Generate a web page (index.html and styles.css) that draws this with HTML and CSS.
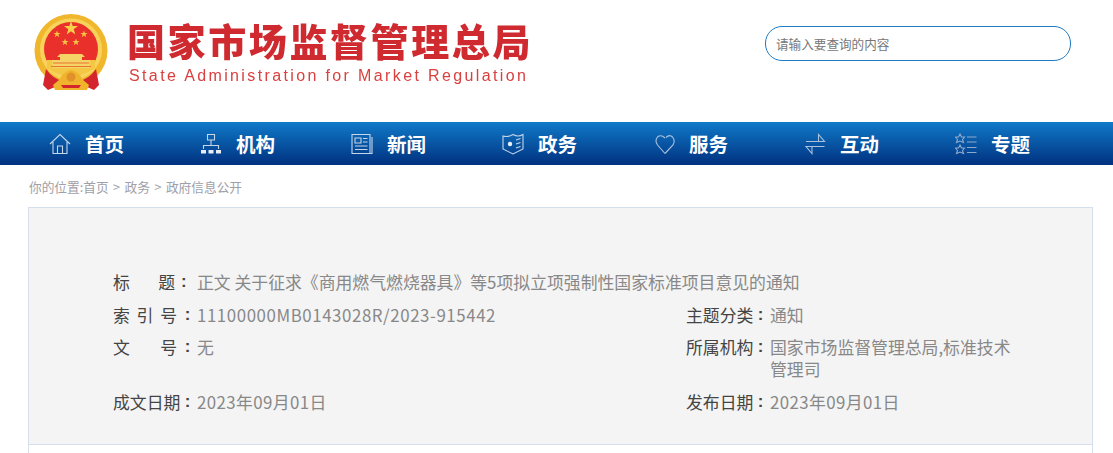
FILE: index.html
```html
<!DOCTYPE html>
<html lang="zh-CN">
<head>
  <meta charset="UTF-8">
  <title>国家市场监督管理总局</title>
  <link rel="stylesheet" href="styles.css">
</head>
<body>
  <div class="header">
    <div class="logo">
      <!-- national emblem -->
      <svg class="emblem" width="80" height="80" viewBox="0 0 80 80">
        <circle cx="40" cy="37.500" r="36.500" fill="#f0b62c"/>
        <circle cx="40" cy="36.500" r="31" fill="#f7d35c"/>
        <circle cx="40" cy="36" r="27" fill="#e9302a"/>
        <path d="M16 47 H64 V55 Q52 63 40 63 Q28 63 16 55Z" fill="#f3c744"/>
        <path d="M29 41 H51 L54 44 H51 V47 H59 V55 H21 V47 H29 V44 H26Z" fill="#f6d366"/>
        <path d="M22 50 H58 M20 53.500 H60" stroke="#e8742f" stroke-width="1"/>
        <polygon points="40,8 41.700,13 47,13 42.700,16.200 44.300,21.500 40,18.300 35.700,21.500 37.300,16.200 33,13 38.300,13" fill="#f8d04a"/>
        <polygon points="26,17.500 26.900,20 29.500,20 27.400,21.600 28.200,24.200 26,22.600 23.800,24.200 24.600,21.600 22.500,20 25.100,20" fill="#f5c644"/>
        <polygon points="53,17.500 53.900,20 56.500,20 54.400,21.600 55.200,24.200 53,22.600 50.800,24.200 51.600,21.600 49.500,20 52.100,20" fill="#f5c644"/>
        <polygon points="34,25.500 34.900,28 37.500,28 35.400,29.600 36.200,32.200 34,30.600 31.800,32.200 32.600,29.600 30.500,28 33.100,28" fill="#f5c644"/>
        <polygon points="45,25.500 45.900,28 48.500,28 46.400,29.600 47.200,32.200 45,30.600 42.800,32.200 43.600,29.600 41.500,28 44.100,28" fill="#f5c644"/>
        <path d="M15 56 Q22 66 32 68 L32 75 L24 74 L17 77 L12 72Z" fill="#d5252c"/>
        <path d="M65 56 Q58 66 48 68 L48 75 L56 74 L63 77 L68 72Z" fill="#d5252c"/>
        <path d="M28 67 Q33 58 40 57 Q47 58 52 67 L58 72 L56 77 H24 L22 72Z" fill="#efb42b"/>
        <circle cx="40" cy="64" r="4.500" fill="#e0912a"/>
        <path d="M30 72 H50 L48 75 H32Z" fill="#d5252c"/>
      </svg>
      <div class="logo-text">
        <div class="logo-cn">国家市场监督管理总局</div>
        <div class="logo-en">State Administration for Market Regulation</div>
      </div>
    </div>
    <input class="search" type="text" placeholder="请输入要查询的内容">
  </div>

  <div class="nav">
    <a class="nav-item">
      <svg class="nav-icon" viewBox="0 0 22 22"><path d="M1 11 L11 1.500 L21 11 M4 9 V20.500 H18 V9 M8.500 20.500 V13 H13.500 V20.500"/></svg>
      首页
    </a>
    <a class="nav-item">
      <svg class="nav-icon" viewBox="0 0 22 22"><path d="M7.500 1.500 H14.500 V7 H7.500Z M11 7 V12.500 M3.500 16 V12.500 H18.500 V16"/><path class="solid" d="M1 17 H6 V20.500 H1Z M8.500 17 H13.500 V20.500 H8.500Z M16 17 H21 V20.500 H16Z"/></svg>
      机构
    </a>
    <a class="nav-item">
      <svg class="nav-icon" viewBox="0 0 22 22"><path d="M1 1.500 H19 V20.500 H1Z M21 4 V20.500 H19 M4 5 H10 V10 H4Z M12 5.500 H16.500 M12 9 H16.500 M4 13 H16.500 M4 16.500 H16.500"/></svg>
      新闻
    </a>
    <a class="nav-item">
      <svg class="nav-icon" viewBox="0 0 22 22"><path d="M1 3 Q6 4.500 11 1.500 Q16 4.500 21 1.500 V16 L11 21 L1 16Z M14 7 L18.500 5.500 M14 11 L18.500 9.500 M14 15 L18.500 13.500"/><circle class="solid" cx="8" cy="11" r="2.200"/></svg>
      政务
    </a>
    <a class="nav-item">
      <svg class="nav-icon nav-icon-soft" viewBox="0 0 22 22"><path d="M12 20.500 L4.500 12 Q1.500 7.500 4.500 4 Q8 1 12 5 M12 20.500 L20 12 Q22.500 7.500 19.500 4 Q16.500 1 13 4.500"/></svg>
      服务
    </a>
    <a class="nav-item">
      <svg class="nav-icon nav-icon-soft" viewBox="0 0 22 22"><path d="M2 8.500 H20.500 L14.500 1.500 V8 M20.500 13.500 H2 L8 20.500 V14"/></svg>
      互动
    </a>
    <a class="nav-item">
      <svg class="nav-icon nav-icon-dim" viewBox="0 0 22 22"><path d="M5 1 L6.500 4 H9.500 L7.500 6.500 L8.500 9.500 L5 8 L1.500 9.500 L2.500 6.500 L0.500 4 H3.500Z M5 12 L6.500 15 H9.500 L7.500 17.500 L8.500 20.500 L5 19 L1.500 20.500 L2.500 17.500 L0.500 15 H3.500Z M12 4 H21.500 M12 9 H21.500 M12 14.500 H21.500 M12 19.500 H21.500"/></svg>
      专题
    </a>
  </div>

  <div class="crumb">你的位置:首页 &gt; 政务 &gt; 政府信息公开</div>

  <div class="panel">
    <div class="info">
      <div class="row row-full">
        <span class="label"><span class="name">标题</span><span class="colon">:</span></span>
        <span class="value">正文 关于征求《商用燃气燃烧器具》等5项拟立项强制性国家标准项目意见的通知</span>
      </div>
      <div class="row">
        <span class="label"><span class="name">索引号</span><span class="colon">:</span></span>
        <span class="value value-code">11100000MB0143028R/2023-915442</span>
      </div>
      <div class="row">
        <span class="label"><span class="name">主题分类</span><span class="colon">:</span></span>
        <span class="value">通知</span>
      </div>
      <div class="row">
        <span class="label"><span class="name">文号</span><span class="colon">:</span></span>
        <span class="value">无</span>
      </div>
      <div class="row">
        <span class="label"><span class="name">所属机构</span><span class="colon">:</span></span>
        <span class="value value-wrap">国家市场监督管理总局,标准技术管理司</span>
      </div>
      <div class="row">
        <span class="label"><span class="name">成文日期</span><span class="colon">:</span></span>
        <span class="value value-date">2023年09月01日</span>
      </div>
      <div class="row">
        <span class="label"><span class="name">发布日期</span><span class="colon">:</span></span>
        <span class="value value-date">2023年09月01日</span>
      </div>
    </div>
  </div>
  <div class="panel-rest"></div>
</body>
</html>
```

FILE: styles.css
```css
body {
  margin: 0;
  background-color: #fff;
  font-family: "Noto Sans CJK SC", "Liberation Sans", sans-serif;
  overflow: hidden;
}

/* header */
.header {
  display: flex;
  justify-content: space-between;
  align-items: flex-start;
  height: 122px;
  padding-right: 42px;
}
.logo {
  display: flex;
  align-items: flex-start;
  padding-left: 31px;
}
.emblem {
  margin-top: 13px;
  filter: blur(0.4px);
}
.logo-text {
  margin-left: 16px;
  filter: blur(0.3px);
}
.logo-cn {
  margin-top: 16px;
  font-size: 38px;
  line-height: 48px;
  font-weight: 900;
  letter-spacing: 2.6px;
  color: #cf2a2f;
  white-space: nowrap;
}
.logo-en {
  margin-top: 3px;
  margin-left: 2px;
  font-family: "Liberation Sans", sans-serif;
  font-size: 16px;
  line-height: 18px;
  letter-spacing: 2.37px;
  color: #d8413f;
  white-space: nowrap;
}
.search {
  box-sizing: border-box;
  width: 306px;
  height: 35px;
  margin-top: 26px;
  padding: 0 10px;
  border: 1px solid #1e7bc4;
  border-radius: 17px;
  background: #fff;
  font-family: "Noto Sans CJK SC", sans-serif;
  font-size: 12.6px;
  outline: none;
}
.search::placeholder {
  color: #777;
  opacity: 1;
}

/* nav */
.nav {
  display: flex;
  height: 43px;
  padding-left: 49px;
  background: linear-gradient(to bottom, #107ac9, #00317f);
}
.nav-item {
  display: flex;
  align-items: center;
  flex: 0 0 151px;
  font-size: 19.5px;
  font-weight: 700;
  color: #fff;
}
.nav-icon {
  width: 22px;
  height: 22px;
  margin-right: 14px;
  fill: none;
  stroke: #c5d6e8;
  stroke-width: 1.1;
}
.nav-icon .solid {
  fill: #e8eef6;
  stroke: none;
}
.nav-icon-soft {
  stroke: #aac2de;
}
.nav-icon-dim {
  stroke: #8fa9cc;
}

/* breadcrumb */
.crumb {
  height: 42px;
  padding-left: 29px;
  font-size: 12.7px;
  line-height: 44px;
  word-spacing: 1.6px;
  color: #a0a0a8;
}

/* info panel */
.panel {
  box-sizing: border-box;
  height: 238px;
  margin: 0 20px 0 28px;
  padding: 63px 0 0 84px;
  border: 1px solid #d5dfeb;
  background-color: #f4f4f4;
}
.panel-rest {
  height: 20px;
  margin: -1px 20px 0 28px;
  border-left: 1px solid #d5dfeb;
  border-right: 1px solid #d5dfeb;
}
.info {
  display: grid;
  grid-template-columns: 573px 335px;
  row-gap: 10.5px;
  font-size: 16.85px;
  line-height: 22px;
}
.row {
  display: flex;
}
.row-full {
  grid-column: 1 / 3;
}
.label {
  box-sizing: border-box;
  display: flex;
  justify-content: space-between;
  flex: 0 0 84px;
  padding-right: 6.7px;
  color: #444;
  white-space: nowrap;
}
.row-full .label {
  padding-right: 10.5px;
}
.name {
  min-width: 64px;
  text-align-last: justify;
}
.row-full .name {
  min-width: 62px;
}
.colon {
  font-family: "Liberation Sans", sans-serif;
  font-weight: 700;
}
.value {
  color: #888;
  white-space: nowrap;
}
.value-code {
  letter-spacing: 0.58px;
}
.value-date {
  letter-spacing: 0.4px;
}
.value-wrap {
  width: 250px;
  white-space: normal;
}
```
